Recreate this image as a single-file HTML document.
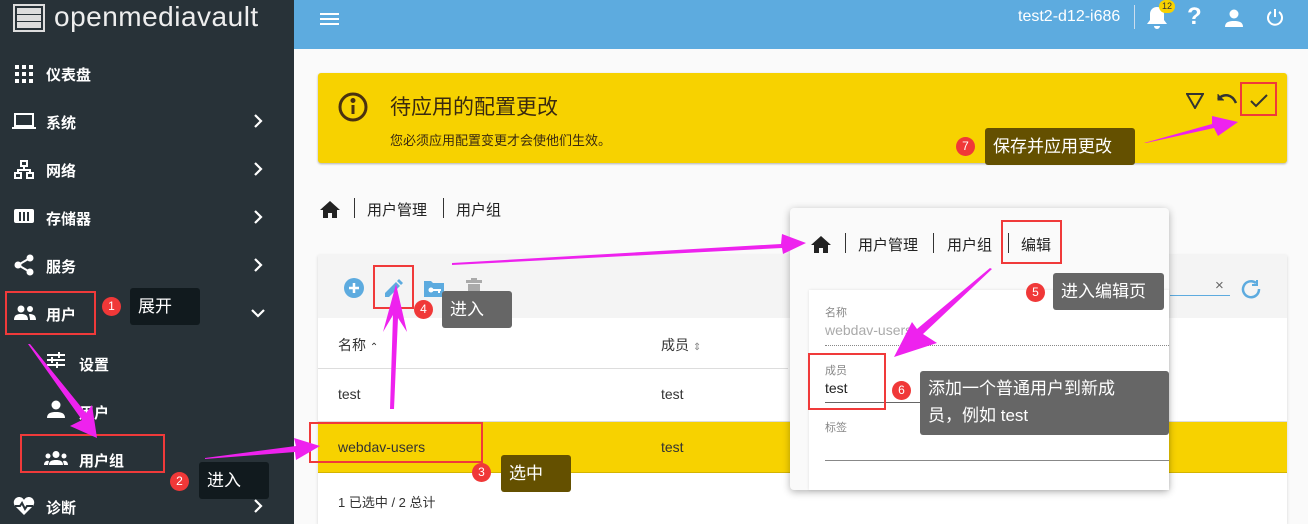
<!DOCTYPE html>
<html><head><meta charset="utf-8"><style>
*{margin:0;padding:0;box-sizing:border-box}
body{width:1308px;height:524px;overflow:hidden;background:#fafafa;font-family:"Liberation Sans","Noto Sans CJK SC",sans-serif;position:relative}
.abs{position:absolute}
#side{left:0;top:0;width:294px;height:524px;background:#283238;color:#fff}
.nav{position:absolute;left:46px;font-size:15px;font-weight:bold;color:#fff}
.chev{position:absolute;left:253px}
#top{left:294px;top:0;width:1014px;height:49px;background:#5dabdf}
.tip{position:absolute;background:#111a1e;color:#fff;font-size:17px;padding:4px 8px;border-radius:3px}
.tip2{position:absolute;background:#666;color:#fff;font-size:17px;padding:4px 8px;border-radius:3px}
.num{position:absolute;width:19px;height:19px;border-radius:50%;background:#f03838;color:#fff;font-size:12px;text-align:center;line-height:19px}
.rb{position:absolute;border:2px solid #f03a3a}
</style></head><body>
<div id="side" class="abs">
 <svg class="abs" style="left:13px;top:4px" width="32" height="28"><rect x="1" y="1" width="30" height="26" fill="none" stroke="#ddd" stroke-width="2"/><rect x="4" y="4" width="24" height="6" fill="#ddd"/><rect x="4" y="11" width="24" height="6" fill="#ddd"/><rect x="4" y="18" width="24" height="6" fill="#ddd"/></svg>
 <div class="abs" style="left:54px;top:1px;font-size:28px;color:#eee;letter-spacing:0.5px">openmediavault</div>
 <svg class="abs" style="left:15px;top:65px" width="18" height="18" fill="#fff"><rect x="0" y="0" width="4" height="4"/><rect x="7" y="0" width="4" height="4"/><rect x="14" y="0" width="4" height="4"/><rect x="0" y="7" width="4" height="4"/><rect x="7" y="7" width="4" height="4"/><rect x="14" y="7" width="4" height="4"/><rect x="0" y="14" width="4" height="4"/><rect x="7" y="14" width="4" height="4"/><rect x="14" y="14" width="4" height="4"/></svg>
 <div class="nav" style="top:64px">仪表盘</div>
 <svg class="abs" style="left:12px;top:113px" width="24" height="17"><rect x="3" y="1" width="18" height="12" fill="none" stroke="#fff" stroke-width="2"/><rect x="0" y="14" width="24" height="2" fill="#fff"/></svg>
 <div class="nav" style="top:112px">系统</div>
 <svg class="abs" style="left:14px;top:160px" width="20" height="20" fill="none" stroke="#fff" stroke-width="2"><rect x="7" y="1" width="6" height="5"/><rect x="1" y="13" width="6" height="5"/><rect x="13" y="13" width="6" height="5"/><path d="M10 6v4M4 13v-3h12v3"/></svg>
 <div class="nav" style="top:160px">网络</div>
 <svg class="abs" style="left:13px;top:208px" width="22" height="16"><rect x="1" y="1" width="20" height="14" rx="2" fill="#fff"/><rect x="6" y="4" width="2" height="9" fill="#283238"/><rect x="10" y="4" width="2" height="9" fill="#283238"/><rect x="14" y="4" width="2" height="9" fill="#283238"/></svg>
 <div class="nav" style="top:208px">存储器</div>
 <svg class="abs" style="left:14px;top:254px" width="20" height="22" fill="#fff"><circle cx="16" cy="4" r="3.5"/><circle cx="4" cy="11" r="3.5"/><circle cx="16" cy="18" r="3.5"/><path d="M16 4L4 11L16 18" fill="none" stroke="#fff" stroke-width="2"/></svg>
 <div class="nav" style="top:256px">服务</div>
 <svg class="abs" style="left:14px;top:305px" width="22" height="15" fill="#fff"><circle cx="7" cy="4" r="3.5"/><circle cx="16" cy="4" r="3"/><path d="M0 15c0-5 3-6 7-6s7 1 7 6zM15 9c4 0 7 1 7 6h-6c0-3-1-5-1-6z"/></svg>
 <div class="nav" style="top:304px">用户</div>
 <svg class="chev" style="top:113px" width="10" height="16" fill="none" stroke="#fff" stroke-width="2.2"><path d="M2 2l6 6-6 6"/></svg>
 <svg class="chev" style="top:161px" width="10" height="16" fill="none" stroke="#fff" stroke-width="2.2"><path d="M2 2l6 6-6 6"/></svg>
 <svg class="chev" style="top:209px" width="10" height="16" fill="none" stroke="#fff" stroke-width="2.2"><path d="M2 2l6 6-6 6"/></svg>
 <svg class="chev" style="top:257px" width="10" height="16" fill="none" stroke="#fff" stroke-width="2.2"><path d="M2 2l6 6-6 6"/></svg>
 <svg class="chev" style="top:498px" width="10" height="16" fill="none" stroke="#fff" stroke-width="2.2"><path d="M2 2l6 6-6 6"/></svg>
 <svg class="abs" style="left:250px;top:308px" width="16" height="10" fill="none" stroke="#fff" stroke-width="2.2"><path d="M2 2l6 6 6-6"/></svg>
 <svg class="abs" style="left:47px;top:352px" width="18" height="16" stroke="#fff" stroke-width="2"><path d="M0 3h18M0 8h18M0 13h18"/><path d="M12 0v6M5 5v6M10 10v6"/></svg>
 <div class="nav" style="top:354px;left:79px">设置</div>
 <svg class="abs" style="left:47px;top:400px" width="18" height="18" fill="#fff"><circle cx="9" cy="5" r="4.5"/><path d="M0 18c0-5 4-6 9-6s9 1 9 6z"/></svg>
 <div class="nav" style="top:402px;left:79px">用户</div>
 <svg class="abs" style="left:44px;top:451px" width="24" height="14" fill="#fff"><circle cx="12" cy="3.5" r="3.5"/><circle cx="4" cy="5" r="2.5"/><circle cx="20" cy="5" r="2.5"/><path d="M5 14c0-4 3-5 7-5s7 1 7 5zM0 14c0-3 2-5 5-4l-1 4zM24 14c0-3-2-5-5-4l1 4z"/></svg>
 <div class="nav" style="top:450px;left:79px">用户组</div>
 <svg class="abs" style="left:13px;top:497px" width="22" height="18" fill="#fff"><path d="M11 18L2 9C-1 5 2 0 6 0c2 0 4 1 5 3 1-2 3-3 5-3 4 0 7 5 4 9z"/><path d="M2 9h5l2-3 3 6 2-3h6" stroke="#283238" stroke-width="2" fill="none"/></svg>
 <div class="nav" style="top:497px">诊断</div>
</div>
<div class="rb" style="left:5px;top:291px;width:91px;height:44px"></div>
<div class="rb" style="left:20px;top:434px;width:145px;height:39px"></div>

<div id="top" class="abs">
 <div class="abs" style="left:26px;top:13px;width:19px;height:2px;background:#fff;box-shadow:0 5px 0 #fff,0 10px 0 #fff"></div>
 <div class="abs" style="left:724px;top:8px;color:#fff;font-size:16px">test2-d12-i686</div>
 <div class="abs" style="left:840px;top:5px;width:1px;height:24px;background:#cde"></div>
 <svg class="abs" style="left:852px;top:6px" width="22" height="24" fill="#fff"><path d="M11 1c-4 0-7 3-7 7v6l-3 4h20l-3-4V8c0-4-3-7-7-7zM8 20h6a3 3 0 0 1-6 0z"/></svg>
 <div class="abs" style="left:865px;top:0px;width:16px;height:13px;border-radius:7px;background:#f7d200;font-size:9px;text-align:center;line-height:13px;color:#333">12</div>
 <div class="abs" style="left:893px;top:3px;color:#fff;font-size:24px;font-weight:bold">?</div>
 <svg class="abs" style="left:931px;top:9px" width="18" height="18" fill="#fff"><circle cx="9" cy="5" r="4.5"/><path d="M0 18c0-5 4-6 9-6s9 1 9 6z"/></svg>
 <svg class="abs" style="left:972px;top:8px" width="18" height="18" fill="none" stroke="#fff" stroke-width="2"><path d="M9 1v8"/><path d="M5 4a7 7 0 1 0 8 0"/></svg>
</div>

<div class="abs" style="left:318px;top:73px;width:969px;height:90px;background:#f7d200;border-radius:3px;box-shadow:0 1px 2px rgba(0,0,0,.3)"></div>
<svg class="abs" style="left:337px;top:91px" width="32" height="32" fill="none" stroke="#4a3210" stroke-width="3"><circle cx="16" cy="16" r="13"/><path d="M16 14v9"/><circle cx="16" cy="9.5" r="1" fill="#4a3210"/></svg>
<div class="abs" style="left:390px;top:91px;font-size:21px;color:#3a2a10">待应用的配置更改</div>
<div class="abs" style="left:390px;top:130px;font-size:13px;color:#3a2a10">您必须应用配置变更才会使他们生效。</div>
<svg class="abs" style="left:1186px;top:93px" width="18" height="16" fill="none" stroke="#333" stroke-width="2"><path d="M1 1h16L9 15z"/></svg>
<svg class="abs" style="left:1216px;top:92px" width="22" height="16" fill="none" stroke="#333" stroke-width="2.5"><path d="M2 7c6-6 14-5 18 4"/><path d="M2 2v6h6" fill="#333" stroke-width="1"/></svg>
<svg class="abs" style="left:1248px;top:92px" width="22" height="18" fill="none" stroke="#333" stroke-width="2"><path d="M3 9l5 5L19 3"/></svg>
<div class="rb" style="left:1240px;top:82px;width:37px;height:34px"></div>

<svg class="abs" style="left:320px;top:201px" width="20" height="17" fill="#222"><path d="M10 0L0 9h3v8h5v-5h4v5h5V9h3z"/></svg>
<div class="abs" style="left:354px;top:198px;width:1px;height:20px;background:#333"></div>
<div class="abs" style="left:367px;top:199px;font-size:15px;color:#222">用户管理</div>
<div class="abs" style="left:443px;top:198px;width:1px;height:20px;background:#333"></div>
<div class="abs" style="left:456px;top:199px;font-size:15px;color:#222">用户组</div>

<div class="abs" style="left:318px;top:255px;width:969px;height:269px;background:#fff;box-shadow:0 1px 3px rgba(0,0,0,.15)"></div>
<div class="abs" style="left:318px;top:255px;width:969px;height:63px;background:#f4f4f4"></div>
<svg class="abs" style="left:344px;top:278px" width="20" height="20"><circle cx="10" cy="10" r="10" fill="#5dabdf"/><path d="M10 5v10M5 10h10" stroke="#fff" stroke-width="2.5"/></svg>
<svg class="abs" style="left:384px;top:278px" width="20" height="20" fill="#5dabdf"><path d="M1 15l11-11 4 4L5 19H1z"/><path d="M13 3l2-2 4 4-2 2z"/></svg>
<svg class="abs" style="left:424px;top:279px" width="20" height="18" fill="#5dabdf"><path d="M0 2h7l2 2h11v14H0z"/><circle cx="7" cy="11" r="2.5" fill="#fff"/><path d="M9 10h8v2h-1v2h-2v-2H9z" fill="#fff"/></svg>
<svg class="abs" style="left:466px;top:278px" width="16" height="19" fill="#aaa"><rect x="0" y="2" width="16" height="3"/><rect x="5" y="0" width="6" height="2"/><rect x="2" y="6" width="12" height="13"/></svg>
<div class="rb" style="left:373px;top:265px;width:41px;height:44px"></div>
<div class="abs" style="left:338px;top:335px;font-size:14px;color:#333">名称 <span style="font-size:10px">⌃</span></div>
<div class="abs" style="left:661px;top:335px;font-size:14px;color:#333">成员 <span style="font-size:10px;color:#888">⇕</span></div>
<div class="abs" style="left:318px;top:368px;width:470px;height:1px;background:#ddd"></div>
<div class="abs" style="left:338px;top:386px;font-size:14px;color:#333">test</div>
<div class="abs" style="left:661px;top:386px;font-size:14px;color:#333">test</div>
<div class="abs" style="left:318px;top:421px;width:969px;height:1px;background:#ddd"></div>
<div class="abs" style="left:318px;top:422px;width:969px;height:51px;background:#f7d200;border-bottom:1px solid #d4b400"></div>
<div class="abs" style="left:338px;top:439px;font-size:14px;color:#333">webdav-users</div>
<div class="abs" style="left:661px;top:439px;font-size:14px;color:#333">test</div>
<div class="rb" style="left:309px;top:422px;width:174px;height:41px"></div>
<div class="abs" style="left:338px;top:492px;font-size:13px;color:#333">1 已选中 / 2 总计</div>
<div class="abs" style="left:1170px;top:295px;width:60px;height:1px;background:#5dabdf"></div>
<div class="abs" style="left:1215px;top:277px;font-size:15px;color:#666">×</div>
<svg class="abs" style="left:1240px;top:278px" width="22" height="22" fill="none" stroke="#5dabdf" stroke-width="2.5"><path d="M19 11a8 8 0 1 1-3-6"/><path d="M17 2v5h-5" stroke-width="2"/></svg>

<div class="abs" style="left:790px;top:208px;width:379px;height:282px;background:#fafafa;border-radius:4px;box-shadow:0 2px 8px rgba(0,0,0,.3)"></div>
<div class="abs" style="left:809px;top:290px;width:360px;height:200px;background:#fff;box-shadow:0 0 3px rgba(0,0,0,.1)"></div>
<svg class="abs" style="left:811px;top:236px" width="20" height="17" fill="#222"><path d="M10 0L0 9h3v8h5v-5h4v5h5V9h3z"/></svg>
<div class="abs" style="left:845px;top:233px;width:1px;height:20px;background:#333"></div>
<div class="abs" style="left:858px;top:234px;font-size:15px;color:#222">用户管理</div>
<div class="abs" style="left:933px;top:233px;width:1px;height:20px;background:#333"></div>
<div class="abs" style="left:947px;top:234px;font-size:15px;color:#222">用户组</div>
<div class="abs" style="left:1008px;top:233px;width:1px;height:20px;background:#333"></div>
<div class="abs" style="left:1021px;top:234px;font-size:15px;color:#222">编辑</div>
<div class="rb" style="left:1001px;top:220px;width:61px;height:44px"></div>
<div class="abs" style="left:825px;top:304px;font-size:11px;color:#888">名称</div>
<div class="abs" style="left:825px;top:322px;font-size:14px;color:#aaa">webdav-users</div>
<div class="abs" style="left:825px;top:345px;width:344px;border-top:1px dotted #888"></div>
<div class="abs" style="left:825px;top:362px;font-size:11px;color:#888">成员</div>
<div class="abs" style="left:825px;top:380px;font-size:14px;color:#222">test</div>
<div class="abs" style="left:825px;top:402px;width:344px;height:1px;background:#666"></div>
<div class="rb" style="left:808px;top:353px;width:78px;height:57px"></div>
<div class="abs" style="left:825px;top:419px;font-size:11px;color:#888">标签</div>
<div class="abs" style="left:825px;top:460px;width:344px;height:1px;background:#888"></div>

<div class="num" style="left:102px;top:297px">1</div><div class="tip" style="left:130px;top:288px;width:70px;height:37px">展开</div>
<div class="num" style="left:170px;top:472px">2</div><div class="tip" style="left:199px;top:462px;width:70px;height:37px">进入</div>
<div class="num" style="left:472px;top:463px">3</div><div class="tip2" style="left:501px;top:455px;width:70px;height:37px;background:#645000">选中</div>
<div class="num" style="left:414px;top:300px">4</div><div class="tip2" style="left:442px;top:291px;width:70px;height:37px">进入</div>
<div class="num" style="left:1026px;top:283px">5</div><div class="tip2" style="left:1053px;top:273px;width:111px;height:37px">进入编辑页</div>
<div class="num" style="left:892px;top:381px">6</div><div class="tip2" style="left:920px;top:371px;width:249px;height:64px;line-height:27px;padding-top:4px">添加一个普通用户到新成<br>员，例如 test</div>
<div class="num" style="left:956px;top:137px">7</div><div class="tip2" style="left:985px;top:128px;width:150px;height:37px;background:#645000">保存并应用更改</div>

<svg class="abs" style="left:0;top:0" width="1308" height="524" fill="#ee22ee">
<polygon points="28,344 82,420 70,426 97,438 92,405 86,413 30,344"/>
<polygon points="205,458 296,446 294,438 320,446 296,460 295,452 205,459"/>
<polygon points="390,409 393,315 383,332 396,284 407,332 398,318 394,409"/>
<polygon points="452,263 781,244 782,234 806,243 783,254 782,248 452,265"/>
<polygon points="992,269 923,334 937,343 894,357 912,322 917,329 990,268"/>
<polygon points="1146,143 1214,128 1218,136 1238,122 1212,116 1212,124 1144,143"/>
</svg>
</body></html>
